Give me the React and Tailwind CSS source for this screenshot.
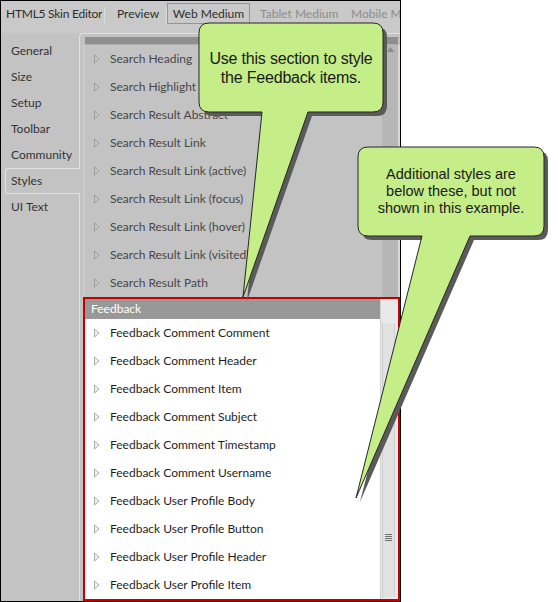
import React from 'react';

const navItems = ['General', 'Size', 'Setup', 'Toolbar', 'Community', 'Styles', 'UI Text'];

const searchItems = [
    'Search Heading',
    'Search Highlight',
    'Search Result Abstract',
    'Search Result Link',
    'Search Result Link (active)',
    'Search Result Link (focus)',
    'Search Result Link (hover)',
    'Search Result Link (visited)',
    'Search Result Path',
];

const feedbackItems = [
    'Feedback Comment Comment',
    'Feedback Comment Header',
    'Feedback Comment Item',
    'Feedback Comment Subject',
    'Feedback Comment Timestamp',
    'Feedback Comment Username',
    'Feedback User Profile Body',
    'Feedback User Profile Button',
    'Feedback User Profile Header',
    'Feedback User Profile Item',
];

function Arrow({ dim }) {
    return (
        <svg width="6" height="10" viewBox="0 0 6 10" className="shrink-0">
            <path d="M0.5 1 L5 5 L0.5 9 Z" fill={dim ? '#c9c9c9' : '#f4f4f4'} stroke={dim ? '#9a9a9a' : '#aaaaaa'} strokeWidth="1" />
        </svg>
    );
}

function Row({ label, dim }) {
    return (
        <div className={`flex h-[28px] items-center gap-[10px] pl-[9px] whitespace-nowrap overflow-hidden ${dim ? 'text-[#474747]' : 'text-[#1e1e1e]'}`}>
            <Arrow dim={dim} />
            <span>{label}</span>
        </div>
    );
}

function Separator() {
    return <span className="mt-[4px] h-[16px] w-px bg-[#a6a6a6] border-r border-[#dedede] box-content" />;
}

function Callouts() {
    return (
        <>
            <svg width="558" height="602" viewBox="0 0 558 602" className="absolute left-0 top-0 pointer-events-none">
                {/* shadows */}
                <g transform="translate(4 4)" fill="#5a5a5a">
                    <path d="M209 23 H373 Q383 23 383 33 V102 Q383 112 373 112 H308 L243 297 L262 112 H209 Q199 112 199 102 V33 Q199 23 209 23 Z" />
                    <path d="M368 147 H534 Q544 147 544 157 V226 Q544 236 534 236 H470 L356 498 L422 236 H368 Q358 236 358 226 V157 Q358 147 368 147 Z" />
                </g>
                <g fill="#c5ed88" stroke="#262626" strokeWidth="1">
                    <path d="M209 23 H373 Q383 23 383 33 V102 Q383 112 373 112 H308 L243 297 L262 112 H209 Q199 112 199 102 V33 Q199 23 209 23 Z" />
                    <path d="M368 147 H534 Q544 147 544 157 V226 Q544 236 534 236 H470 L356 498 L422 236 H368 Q358 236 358 226 V157 Q358 147 368 147 Z" />
                </g>
            </svg>
            <div className="absolute left-[199px] top-[23px] w-[184px] h-[89px] flex items-center justify-center text-center text-[16px] leading-[19px] text-[#1a1a1a] font-['Liberation_Sans',Arial,sans-serif] tracking-[-0.2px]">
                <p>Use this section to style<br />the Feedback items.</p>
            </div>
            <div className="absolute left-[358px] top-[147px] w-[186px] h-[89px] flex items-center justify-center text-center text-[14.5px] leading-[17px] text-[#1a1a1a] font-['Liberation_Sans',Arial,sans-serif]">
                <p>Additional styles are<br />below these, but not<br />shown in this example.</p>
            </div>
        </>
    );
}

export default function App() {
    return (
        <div className="relative w-[558px] h-[602px] bg-white overflow-hidden font-['Lato','Noto_Sans',sans-serif] text-[12px]">
            <div className="w-[401px] h-[602px] border border-black bg-[#c3c3c3] flex flex-col">
                {/* Tab bar */}
                <div className="h-[32px] flex items-start pt-[2px] bg-[#c9c9c9] text-[#2e2e2e] whitespace-nowrap overflow-hidden">
                    <span className="w-[103px] shrink-0 h-[21px] flex items-center pl-[5px] tracking-[-0.25px]">HTML5 Skin Editor</span>
                    <Separator />
                    <span className="w-[61px] shrink-0 h-[21px] flex items-center pl-[12px]">Preview</span>
                    <Separator />
                    <span className="w-[83px] shrink-0 h-[21px] flex items-center justify-center border border-[#6d9bd1]">Web Medium</span>
                    <span className="w-[101px] shrink-0 h-[21px] flex items-center pl-[10px] text-[#8c8c8c]">Tablet Medium</span>
                    <span className="shrink-0 h-[21px] flex items-center text-[#8c8c8c]">Mobile M</span>
                </div>

                <div className="flex flex-1 min-h-0">
                    {/* Left nav */}
                    <div className="w-[78px] shrink-0 pt-[5px] text-[#333]">
                        {navItems.map((n) =>
                            n === 'Styles' ? (
                                <div key={n} className="relative z-10 ml-[4px] -mr-px h-[26px] flex items-center pl-[5px] border border-r-0 border-[#e2e2e2] rounded-l-[3px] bg-[#c3c3c3]">
                                    {n}
                                </div>
                            ) : (
                                <div key={n} className="h-[26px] flex items-center pl-[10px]">
                                    {n}
                                </div>
                            )
                        )}
                    </div>

                    {/* Content panel */}
                    <div className="flex-1 min-w-0 border-l border-t border-[#e0e0e0] rounded-tl-[4px] pt-[3px] pl-[3px] flex flex-col">
                        <div className="h-[8px] ml-[2px] mr-[2px] bg-[#8f8f8f] border-b border-[#b0b0b0]" />
                        {/* dimmed search section */}
                        <div className="flex border-l-2 border-[#cbcbcb]">
                            <div className="flex-1 min-w-0">
                                {searchItems.map((s) => (
                                    <Row key={s} label={s} dim />
                                ))}
                            </div>
                            <div className="w-[18px] shrink-0 bg-[#b6b6b6] border-r-2 border-[#d8d8d8] flex justify-center pt-[2px]">
                                <svg width="7" height="5" viewBox="0 0 7 5"><path d="M0 5 L3.5 0 L7 5 Z" fill="#8a8a8a" /></svg>
                            </div>
                        </div>

                        {/* highlighted feedback section */}
                        <div className="flex-1 min-h-0 flex border-2 border-[#c40000] bg-white">
                            <div className="flex-1 min-w-0">
                                <div className="h-[20px] bg-[#989898] text-white flex items-center pl-[6px]">Feedback</div>
                                {feedbackItems.map((f) => (
                                    <Row key={f} label={f} />
                                ))}
                            </div>
                            <div className="w-[18px] shrink-0 bg-[#e9e9e9] border-l border-[#d2d2d2] flex">
                                <div className="mt-[24px] mb-[2px] ml-[1px] w-[13px] border-x border-[#cfcfcf] bg-[#e2e2e2] flex flex-col items-center justify-end pb-[56px]">
                                    <svg width="7" height="7" viewBox="0 0 7 7">
                                        <path d="M0 0.5 H7 M0 2.5 H7 M0 4.5 H7 M0 6.5 H7" stroke="#6e6e6e" strokeWidth="1" />
                                    </svg>
                                </div>
                            </div>
                        </div>
                    </div>
                </div>
            </div>
            <Callouts />
        </div>
    );
}
